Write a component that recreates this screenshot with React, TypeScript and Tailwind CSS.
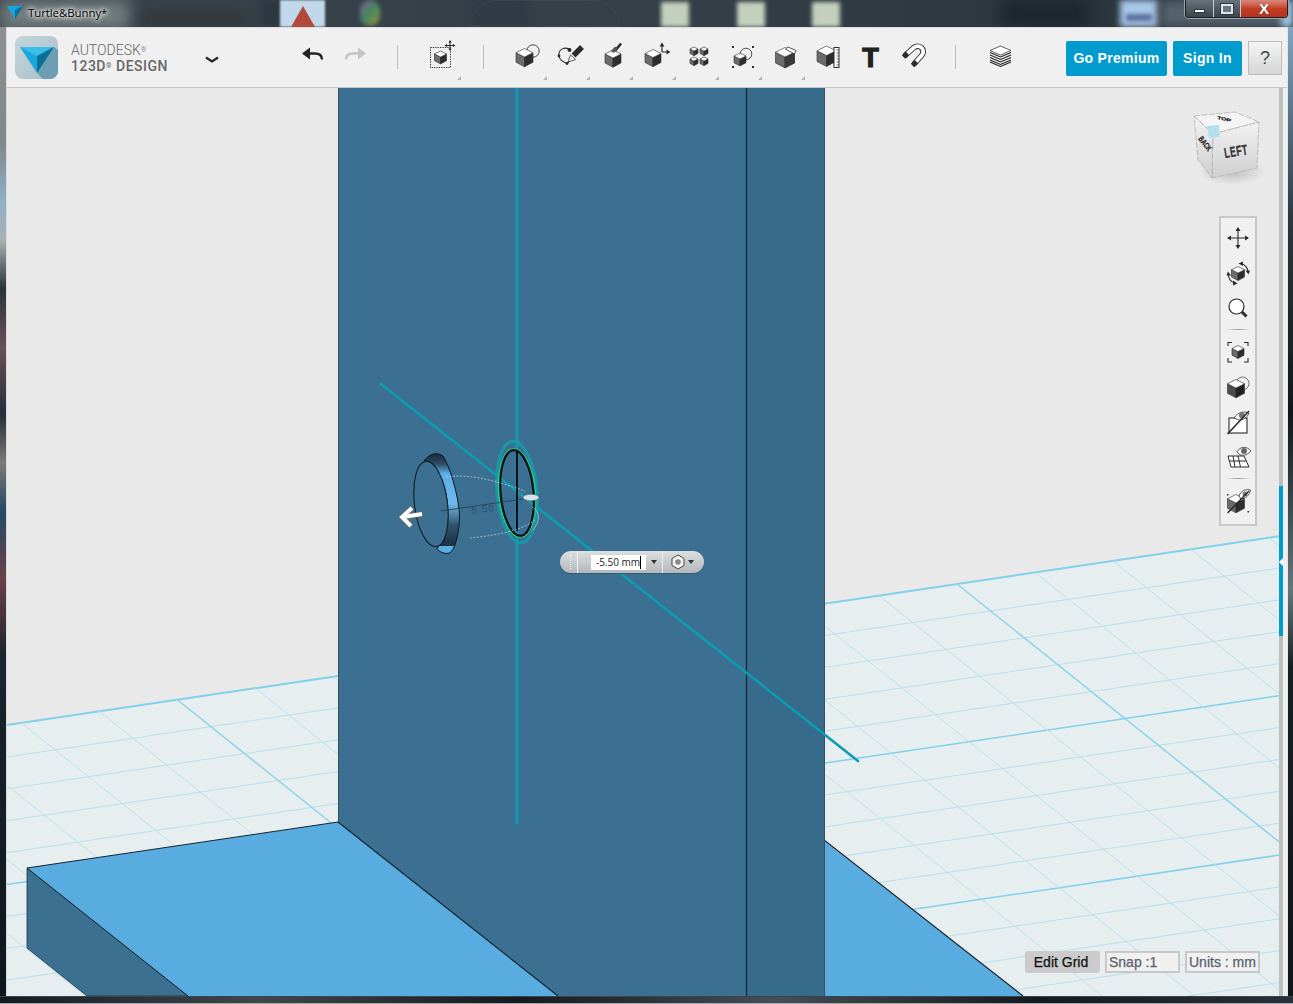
import type { ReactNode } from "react";

const INK = "#2b2b2b";

/** Small isometric box used by most of the toolbar glyphs. */
function Box({ x, y, s, dark = "#2e2e2e", mid = "#6c6c6c" }: { x: number; y: number; s: number; dark?: string; mid?: string }) {
  const h = s * 0.5;
  return (
    <g strokeWidth={0.6} stroke={INK} strokeLinejoin="round">
      <polygon points={`${x - s},${y - h} ${x},${y} ${x},${y + s * 1.15} ${x - s},${y + s * 0.62}`} fill={mid} />
      <polygon points={`${x + s},${y - h} ${x},${y} ${x},${y + s * 1.15} ${x + s},${y + s * 0.62}`} fill={dark} />
      <polygon points={`${x},${y - s} ${x + s},${y - h} ${x},${y} ${x - s},${y - h}`} fill="#fff" />
    </g>
  );
}

function Glyph({ children, size = 30 }: { children: ReactNode; size?: number }) {
  return (
    <svg width={size} height={size} viewBox={`0 0 ${size} ${size}`} fill="none">
      {children}
    </svg>
  );
}

const toolIcons: { name: string; corner: boolean; icon: ReactNode }[] = [
  {
    name: "primitives",
    corner: true,
    icon: (
      <>
        <circle cx="21" cy="11" r="6.2" fill="#f0f0f0" stroke={INK} strokeWidth="0.9" />
        <Box x={12.5} y={17} s={8.5} />
      </>
    ),
  },
  {
    name: "sketch",
    corner: true,
    icon: (
      <>
        <path d="M16 10C10 6 3 9 4 16C4.500 20 8 22 12 23.500L16 19" stroke={INK} strokeWidth="1.1" />
        <circle cx="14.500" cy="10" r="2" fill={INK} />
        <circle cx="4" cy="16" r="1.4" fill={INK} />
        <circle cx="12" cy="23.500" r="1.4" fill={INK} />
        <path d="M27 7L18.500 15.500" stroke={INK} strokeWidth="5.500" />
        <path d="M15.500 15L20.500 19.500L13 22Z" fill="#fff" stroke={INK} strokeWidth="0.8" />
      </>
    ),
  },
  {
    name: "construct",
    corner: true,
    icon: (
      <>
        <Box x={15} y={18} s={8} />
        <path d="M17 11L23 3.500" stroke={INK} strokeWidth="2.600" />
        <path d="M13 11L17 6.500L20 9L15.500 13Z" fill="#555" />
      </>
    ),
  },
  {
    name: "modify",
    corner: true,
    icon: (
      <>
        <Box x={12} y={17.500} s={8} />
        <path d="M21 12V5M21 12H27" stroke={INK} strokeWidth="1.2" />
        <path d="M21 2.500L23.500 6.500H18.500ZM29.500 12L25.500 9.500V14.500Z" fill={INK} />
      </>
    ),
  },
  {
    name: "pattern",
    corner: true,
    icon: (
      <>
        <Box x={10} y={11} s={4} />
        <Box x={20} y={11} s={4} />
        <Box x={10} y={21} s={4} />
        <Box x={20} y={21} s={4} />
      </>
    ),
  },
  {
    name: "grouping",
    corner: true,
    icon: (
      <>
        <circle cx="19" cy="14" r="5.8" fill="#f0f0f0" stroke={INK} strokeWidth="0.8" />
        <Box x={13} y={19} s={6} />
        <g fill={INK}>
          <rect x="5" y="6" width="2" height="2" />
          <rect x="25" y="6" width="2" height="2" />
          <rect x="5" y="26" width="2" height="2" />
          <rect x="25" y="26" width="2" height="2" />
        </g>
      </>
    ),
  },
  {
    name: "combine",
    corner: true,
    icon: (
      <>
        <Box x={15} y={17} s={9.500} />
        <polygon points="18,7 26,10.500 24.500,14 15.500,9" fill="#fff" stroke={INK} strokeWidth="0.8" />
        <polygon points="24.500,14 25,23 15,28 15,17" fill="#3a3a3a" />
      </>
    ),
  },
  {
    name: "measure",
    corner: false,
    icon: (
      <>
        <Box x={13.500} y={15.500} s={9.500} />
        <rect x="21" y="7.500" width="5" height="20" fill="#fff" stroke={INK} strokeWidth="1" />
        <path d="M23.500 10H26M23.500 13H26M23.500 16H26M23.500 19H26M23.500 22H26M23.500 25H26" stroke={INK} strokeWidth="0.7" />
      </>
    ),
  },
  {
    name: "text",
    corner: false,
    icon: (
      <span className="mt-[3px] block h-[30px] font-['Liberation_Sans',sans-serif] text-[27px] font-bold leading-[30px] text-[#222] [-webkit-text-stroke:1.2px_#222]">
        T
      </span>
    ),
  },
  {
    name: "snap",
    corner: false,
    icon: (
      <Glyph>
        <g transform="translate(0 1)">
          <path d="M5.500 15L15 6.500C20 2.500 27 8.500 23 14L15 23" stroke={INK} strokeWidth="5.600" />
          <path d="M5.500 15L15 6.500C20 2.500 27 8.500 23 14L15 23" stroke="#fff" strokeWidth="3.800" />
          <path d="M4.500 16L8.500 12.300M13.500 24.500L17.500 20.700" stroke={INK} strokeWidth="5" />
        </g>
      </Glyph>
    ),
  },
];

const navIcons: ReactNode[] = [
  <>
    <path d="M14 4V24M4 14H24" stroke={INK} strokeWidth="1.1" />
    <path d="M14 3L16.500 7H11.500ZM14 25L16.500 21H11.500ZM3 14L7 11.500V16.500ZM25 14L21 11.500V16.500Z" fill={INK} />
  </>,
  <>
    <Box x={14} y={14} s={6.500} />
    <path d="M17 4.500C21 5.500 24 9 24 13M11 24C7 23 4 19.500 4.500 15" stroke={INK} strokeWidth="1.1" />
    <path d="M14.500 4.500L19 2.500V7ZM24.500 15.500L21.500 11.500H26ZM13.500 24.500L9 26.500V21.500ZM4 12.500L7 16.500H2.500Z" fill={INK} />
  </>,
  <>
    <circle cx="12.500" cy="12.500" r="7.500" fill="#fff" stroke={INK} strokeWidth="1.2" />
    <path d="M18 18L22.500 22.500" stroke={INK} strokeWidth="3" />
  </>,
  null,
  <>
    <Box x={14} y={13.500} s={6} />
    <path d="M4 8V4.500H8M20 4.500H24V8M4 20V24H8M20 24H24V20" stroke={INK} strokeWidth="1.1" />
  </>,
  <>
    <circle cx="18.500" cy="10.500" r="6.500" fill="#f0f0f0" stroke="#555" strokeWidth="0.8" />
    <Box x={12} y={15} s={8.500} dark="#222" mid="#4c4c4c" />
  </>,
  <>
    <rect x="5" y="10" width="18" height="15" fill="#fff" stroke={INK} strokeWidth="1.1" />
    <path d="M10 10C14 4 20 3 25 5C23 10 19 12 15 12Z" fill="#fff" stroke={INK} strokeWidth="0.8" />
    <circle cx="18" cy="7.500" r="3" fill="#777" />
    <path d="M3.500 26L25 3" stroke={INK} strokeWidth="1.600" />
  </>,
  <>
    <path d="M4 13H20L25 24H7ZM5.500 18H22M9 13L11 24M14 13L16.500 24" stroke={INK} strokeWidth="1" fill="#fff" />
    <path d="M13 9C16 3 23 3 27 8C23 13 16 14 13 9Z" fill="#fff" stroke={INK} strokeWidth="0.8" />
    <circle cx="20" cy="8" r="3" fill="#666" />
  </>,
  null,
  <>
    <Box x={12} y={16} s={8.500} />
    <path d="M15 9C17 3 23 2 26.500 3C26 8 21 12 17 12Z" fill="#fff" stroke={INK} strokeWidth="0.8" />
    <circle cx="21" cy="7" r="2.500" fill="#777" />
    <path d="M3.500 26L25 4" stroke={INK} strokeWidth="1.500" />
    <rect x="3" y="7" width="1.500" height="1.500" fill={INK} />
    <rect x="23.500" y="24" width="1.500" height="1.500" fill={INK} />
  </>,
];

function Separator({ className }: { className: string }) {
  return <div className={`mt-[17px] h-[24px] w-px bg-[#bcbcbc] ${className}`} />;
}

function ToolSlot({ icon, corner, className = "w-[43px]" }: { icon: ReactNode; corner: boolean; className?: string }) {
  return (
    <div className={`relative flex h-[59px] shrink-0 justify-center pt-[12px] ${className}`}>
      {icon}
      {corner && (
        <span className="absolute bottom-[7px] right-[1px] h-0 w-0 border-b-[4px] border-l-[4px] border-b-[#b4b4b4] border-l-transparent" />
      )}
    </div>
  );
}

function TitleBar() {
  return (
    <div className="relative h-[27px] shrink-0 overflow-hidden bg-gradient-to-r from-[#3a444d] via-[#353f48] to-[#27323b]">
      {/* blurred desktop behind the glass frame */}
      <div className="absolute left-0 top-0 h-[30px] w-[130px] bg-[#747e80] blur-[8px]" />
      <div className="absolute left-[140px] top-[10px] h-[17px] w-[110px] bg-[#33383a] blur-[8px]" />
      <div className="absolute left-[260px] top-0 h-[27px] w-[60px] bg-[#2c3741] blur-[4px]" />
      <div className="absolute left-[280px] top-0 h-[27px] w-[45px] bg-[#c0d8ea] blur-[1px]" />
      <div className="absolute left-[291px] top-[6px] h-[21px] w-[24px] bg-[#b14a3a] [clip-path:polygon(50%_0,100%_100%,0_100%)]" />
      <div className="absolute left-[360px] top-0 h-[26px] w-[20px] rounded-full bg-gradient-to-br from-[#7a4f9a] via-[#3f8a5c] to-[#a08c3a] blur-[2px]" />
      <div className="absolute left-[469px] top-0 h-[27px] w-[60px] bg-[#2f3a44] blur-[6px]" />
      <div className="absolute left-[470px] top-0 h-[27px] w-[150px] rounded-t-full border border-[#46525c] opacity-40" />
      <div className="absolute left-[661px] top-[2px] h-[25px] w-[28px] bg-[#c4d0bd] blur-[2px]" />
      <div className="absolute left-[737px] top-[2px] h-[25px] w-[28px] bg-[#c4d0bd] blur-[2px]" />
      <div className="absolute left-[812px] top-[2px] h-[25px] w-[28px] bg-[#c4d0bd] blur-[2px]" />
      <div className="absolute left-[1000px] top-0 h-[27px] w-[90px] bg-[#1d252d] blur-[8px]" />
      <div className="absolute left-[1120px] top-0 h-[27px] w-[38px] bg-[#a9c9ea] blur-[3px]" />
      <div className="absolute left-[1126px] top-[14px] h-[7px] w-[26px] bg-[#5a6c9c] blur-[2px]" />
      <div className="absolute left-[1160px] top-0 h-[27px] w-[133px] bg-[#56636d] blur-[6px]" />
      <div className="absolute right-0 top-0 h-[27px] w-[12px] bg-[#9dc3de] blur-[3px]" />

      <div className="relative flex h-full items-start pl-[7px] pt-[5px]">
        <svg width="16" height="15" viewBox="0 0 16 15">
          <polygon points="0,1 16,1 8,14" fill="#17a5dc" />
          <polygon points="8,5 16,1 8,14" fill="#0a6f96" />
        </svg>
        <span className="ml-[5px] font-['Open_Sans',sans-serif] text-[11.500px] leading-[16px] tracking-[-0.1px] text-black [text-shadow:0_0_6px_#fff,0_0_6px_#fff,0_0_3px_#fff]">
          Turtle&amp;Bunny*
        </span>
      </div>

      {/* window controls */}
      <div className="absolute left-[1185px] top-0 flex h-[18px] w-[103px] overflow-hidden rounded-b-[4px] border border-t-0 border-[#1c2227] shadow-[0_0_0_1px_#9aa3a9]">
        <div className="flex w-[28px] items-end justify-center border-r border-[#c4ccd2] bg-gradient-to-b from-[#69747c] to-[#3b444b] pb-[4px]">
          <div className="h-[4px] w-[11px] border border-[#30383e] bg-white" />
        </div>
        <div className="flex w-[27px] items-center justify-center border-r border-[#c4ccd2] bg-gradient-to-b from-[#69747c] to-[#3b444b]">
          <div className="h-[10px] w-[12px] border-2 border-[#dfe5ea] bg-[#6a757d] shadow-[0_0_0_1px_#30383e]" />
        </div>
        <div className="flex flex-1 items-center justify-center bg-gradient-to-b from-[#d8897c] via-[#c23e24] to-[#b4321c] font-['Liberation_Sans',sans-serif] text-[15px] font-bold leading-none text-white [text-shadow:0_0_1px_#333]">
          X
        </div>
      </div>
    </div>
  );
}

function Toolbar() {
  return (
    <div className="flex h-[60px] shrink-0 items-start border-t border-[#dcdcdc] bg-[#f0f0f0] pl-[8px]">
      {/* logo */}
      <svg className="mt-[8px] shrink-0" width="43" height="43" viewBox="0 0 43 43">
        <defs>
          <linearGradient id="logoBg" x1="0" y1="0" x2="1" y2="1">
            <stop offset="0" stopColor="#c5d4da" />
            <stop offset="1" stopColor="#a8bfca" />
          </linearGradient>
        </defs>
        <rect width="43" height="43" rx="8" fill="url(#logoBg)" />
        <path d="M22 37L39 11L43 14V35A8 8 0 0 1 35 43H28Z" fill="#6d9db3" />
        <polygon points="5,11 39,11 22,37" fill="#19a7dc" />
        <polygon points="5,11 39,11 22,20" fill="#3bbdea" />
        <polygon points="22,20 39,11 22,37" fill="#0b6f95" />
      </svg>
      <div className="ml-[13px] mt-[14px] w-[125px] shrink-0 font-['Roboto',sans-serif] text-[#666] [&_sup]:text-[7px] [&_sup]:leading-[0]">
        <div className="text-[14px] font-light leading-[16px]">
          AUTODESK<sup>®</sup>
        </div>
        <div className="text-[14px] font-medium leading-[16px] tracking-[0.5px]">
          123D<sup>®</sup> DESIGN
        </div>
      </div>
      <div className="flex h-[59px] w-[32px] shrink-0 justify-center pt-[27px]">
        <svg width="16" height="10" viewBox="0 0 16 10" fill="none">
          <path d="M2 2.500L8 6.500L14 2.500" stroke="#222" strokeWidth="2.200" />
        </svg>
      </div>

      <div className="ml-[64px] flex h-[59px] w-[42px] shrink-0 justify-center pt-[14px]">
        <Glyph>
          <path d="M7 11.500H17C22 11.500 24 14 24 17.500" stroke="#222" strokeWidth="2.400" />
          <path d="M4 11.500L12 5.500V17.500Z" fill="#222" />
        </Glyph>
      </div>
      <div className="flex h-[59px] w-[42px] shrink-0 justify-center pt-[14px]">
        <Glyph>
          <path d="M23 11.500H13C8 11.500 6 14 6 17.500" stroke="#c4c4c4" strokeWidth="2.400" />
          <path d="M26 11.500L18 5.500V17.500Z" fill="#c4c4c4" />
        </Glyph>
      </div>

      <Separator className="ml-[21px]" />
      <ToolSlot
        className="ml-[22px] w-[42px]"
        corner
        icon={
          <Glyph>
            <rect x="4.500" y="7.500" width="20" height="20" stroke="#222" strokeWidth="1" strokeDasharray="1.200 1.200" fill="none" />
            <Box x={14.500} y={17} s={6} />
            <path d="M24 1.500V9.500M20 5.500H28" stroke="#222" strokeWidth="1" />
            <path d="M24 0L25.500 2.500H22.500ZM24 11L25.500 8.500H22.500ZM18.500 5.500L21 4V7ZM29.500 5.500L27 4V7Z" fill="#222" />
          </Glyph>
        }
      />
      <Separator className="ml-[21px]" />
      <div className="ml-[21px] flex">
        {toolIcons.map((t) => (
          <ToolSlot
            key={t.name}
            icon={t.name === "text" || t.name === "snap" ? t.icon : <Glyph>{t.icon}</Glyph>}
            corner={t.corner}
          />
        ))}
      </div>
      <Separator className="ml-[20px]" />
      <ToolSlot
        className="ml-[23px] w-[42px]"
        corner={false}
        icon={
          <Glyph>
            <polygon points="15.500,6 26,10.500 15.500,15 5,10.500" fill="#fff" stroke="#222" strokeWidth="0.7" />
            <path d="M5 12.500L15.500 17L26 12.500M5 15L15.500 19.500L26 15M5 17.500L15.500 22L26 17.500M5 20L15.500 24.500L26 20M5 22L15.500 26.500L26 22" stroke="#222" strokeWidth="1.100" />
          </Glyph>
        }
      />

      <button className="ml-[45px] mt-[13px] h-[35px] w-[101px] shrink-0 rounded-[2px] bg-[#019ccd] font-['Liberation_Sans',sans-serif] text-[14px] font-bold tracking-[0.3px] text-white">
        Go Premium
      </button>
      <button className="ml-[6px] mt-[13px] h-[35px] w-[69px] shrink-0 rounded-[2px] bg-[#019ccd] font-['Liberation_Sans',sans-serif] text-[14px] font-bold tracking-[0.3px] text-white">
        Sign In
      </button>
      <button className="ml-[6px] mt-[13px] h-[34px] w-[34px] shrink-0 border border-[#bdbdbd] bg-gradient-to-b from-[#f4f4f4] to-[#d6d6d6] font-['Liberation_Sans',sans-serif] text-[18px] text-[#444]">
        ?
      </button>
    </div>
  );
}

function ViewCube() {
  return (
    <g>
      <defs>
        <linearGradient id="cubeRight" x1="0" y1="0" x2="0" y2="1">
          <stop offset="0" stopColor="#f2f2f2" />
          <stop offset="1" stopColor="#cfcfcf" />
        </linearGradient>
        <radialGradient id="cubeShadow">
          <stop offset="0" stopColor="#000" stopOpacity="0.18" />
          <stop offset="1" stopColor="#000" stopOpacity="0" />
        </radialGradient>
      </defs>
      <ellipse cx="1232" cy="172" rx="34" ry="13" fill="url(#cubeShadow)" />
      <g stroke="#b0b0b0" strokeWidth="0.8" strokeDasharray="6 1.500">
        <polygon points="1194,116 1235,112 1259,122 1213,134" fill="#f4f4f4" />
        <polygon points="1213,134 1259,122 1257,168 1212,178" fill="url(#cubeRight)" />
        <polygon points="1194,116 1213,134 1212,178 1198,160" fill="url(#cubeRight)" />
      </g>
      <polygon points="1207,126 1219,125 1220,137 1209,138" fill="#b3dfef" />
      <text transform="translate(1225 158) rotate(-9) scale(0.72 1.200)" fontFamily="'Liberation Sans', sans-serif" fontWeight="700" fontSize="12" fill="#333" stroke="#333" strokeWidth="0.3" letterSpacing="0.8">
        LEFT
      </text>
      <text transform="translate(1198 139) rotate(52) scale(0.7 1)" fontFamily="'Liberation Sans', sans-serif" fontWeight="700" fontSize="8" fill="#222" stroke="#222" strokeWidth="0.3">
        BACK
      </text>
      <text transform="translate(1217 119) rotate(12) scale(1 0.600)" fontFamily="'Liberation Sans', sans-serif" fontWeight="700" fontSize="7" fill="#111" stroke="#111" strokeWidth="0.3">
        TOP
      </text>
    </g>
  );
}

function Scene() {
  // floor grid: u runs along the back edge, v runs into the room
  const us = Array.from({ length: 36 }, (_, i) => i - 30);
  const vs = Array.from({ length: 16 }, (_, i) => i);
  const slope = 0.1485;
  return (
    <svg className="absolute inset-0 h-full w-full" viewBox="7 88 1272 908" preserveAspectRatio="none">
      <defs>
        <linearGradient id="rim" x1="0" y1="0" x2="0" y2="1">
          <stop offset="0" stopColor="#1b2c3a" />
          <stop offset="0.1" stopColor="#2d4a60" />
          <stop offset="0.2" stopColor="#5aaee6" />
          <stop offset="0.5" stopColor="#6cb8ec" />
          <stop offset="0.72" stopColor="#2e536c" />
          <stop offset="0.92" stopColor="#1c3040" />
          <stop offset="0.93" stopColor="#5aaee6" />
          <stop offset="1" stopColor="#5aaee6" />
        </linearGradient>
      </defs>
      <rect x="7" y="88" width="1272" height="908" fill="#e9e9e9" />
      <polygon points="7,726 1279,537 1279,996 7,996" fill="#e6eef0" />

      {vs.map((v) => {
        const x0 = 957 + v * 33.6;
        const y0 = 584 + v * 26.9;
        const major = v % 5 === 0;
        return (
          <line
            key={`v${v}`}
            x1={7}
            y1={y0 + slope * (x0 - 7)}
            x2={1279}
            y2={y0 - slope * (1279 - x0)}
            stroke={major ? "#82d0e9" : "#b9e0ec"}
            strokeWidth={v === 0 ? 2 : major ? 1.500 : 1}
          />
        );
      })}
      {us.map((u) => {
        const x0 = 957 + u * 78;
        const y0 = 584 - u * 11.55;
        const major = u % 10 === 0;
        return (
          <line
            key={`u${u}`}
            x1={x0}
            y1={y0}
            x2={x0 + 33.6 * 30}
            y2={y0 + 26.9 * 30}
            stroke={major ? "#8ed3ea" : "#bde1ed"}
            strokeWidth={major ? 1.500 : 1}
          />
        );
      })}

      {/* slab */}
      <polygon points="27,868 27,948 87,996 188,996" fill="#3c7090" stroke="#21323f" strokeWidth="0.8" />
      <polygon points="27,868 338,822 558,996 188,996" fill="#58acdf" />
      <polygon points="824,841 1023,996 824,996" fill="#58acdf" />
      <path d="M27 868L338 822M27 868L188 996" stroke="#14222c" strokeWidth="1" fill="none" />
      <path d="M824 840L1023 996" stroke="#14222c" strokeWidth="1.200" fill="none" />

      {/* upright */}
      <polygon points="338,88 746,88 746,996 558,996 338,822" fill="#3c7092" />
      <rect x="746" y="88" width="78.500" height="908" fill="#366b8c" />
      <path d="M338.500 88V822M824.500 88V996" stroke="#3a4f5c" strokeWidth="1" />
      <path d="M746.500 88V996" stroke="#14222c" strokeWidth="1.200" />
      <path d="M338 822L558 996" stroke="#14222c" strokeWidth="1.200" />

      {/* axes of the move gizmo */}
      <path d="M517 88V823M381 384L858 761" stroke="#0d9cb1" strokeWidth="2.600" strokeLinecap="round" fill="none" />

      {/* sketch circle being pushed */}
      <g transform="rotate(-5 517 492)">
        <ellipse cx="517" cy="492" rx="20" ry="51" fill="none" stroke="#14a0ac" strokeWidth="3" opacity="0.8" />
        <ellipse cx="517" cy="493" rx="18" ry="44" fill="none" stroke="#21d38b" strokeWidth="2" />
        <ellipse cx="517" cy="493" rx="16.500" ry="43" fill="none" stroke="#0b0f12" strokeWidth="2.200" />
      </g>
      <path d="M517 451V531" stroke="#0b0f12" strokeWidth="2" />

      {/* ghost of the extruded disc */}
      <path
        d="M424 461C428 455 436 451 443 456C449 465 458 492 459.500 515C459.500 530 456 547 451 552C447 555 441 553 437 549C443 540 449 520 447 500C445 482 435 467 424 461Z"
        fill="url(#rim)"
        stroke="#0d151b"
        strokeWidth="1"
      />
      <ellipse cx="431" cy="504" rx="16.500" ry="43" transform="rotate(-7 431 504)" fill="#3c7092" stroke="#0d151b" strokeWidth="1" />

      {/* dimension */}
      <path d="M446 477C470 473 500 482 525 491M470 538C490 536 520 532 535 520" stroke="#c9d4da" strokeWidth="1" strokeDasharray="2 1.500" fill="none" opacity="0.7" />
      <path d="M441 511L530 498" stroke="#2e4050" strokeWidth="0.9" />
      <path d="M532 507C541 512 540 522 533 530" stroke="#c9d4da" strokeWidth="1" fill="none" opacity="0.6" />
      <text transform="translate(472 514) rotate(-8)" fontFamily="'Liberation Sans', sans-serif" fontSize="10" fill="#2f4f66" letterSpacing="1">
        5.50
      </text>
      <ellipse cx="531" cy="497.500" rx="8" ry="3.200" fill="#d7e3e6" stroke="#4b5c66" strokeWidth="0.5" />

      {/* drag arrow */}
      <path d="M423 514L403 517M412 508L402 517L411 526" stroke="#666" strokeWidth="6.500" fill="none" strokeLinejoin="round" opacity="0.7" />
      <path d="M422 514L403 517M412 508L402 517L411 526" stroke="#fff" strokeWidth="4" fill="none" strokeLinejoin="miter" />

      <ViewCube />
    </svg>
  );
}

function NavPanel() {
  return (
    <div className="absolute left-[1212px] top-[128px] flex h-[310px] w-[38px] flex-col items-center border-2 border-[#c8c8c8] bg-[#f0f0f0] pt-[2px]">
      {navIcons.map((icon, i) =>
        icon ? (
          <div key={i} className="flex h-[35px] w-full shrink-0 items-center justify-center">
            <Glyph size={28}>{icon}</Glyph>
          </div>
        ) : (
          <div key={i} className="my-[4px] h-px w-[25px] shrink-0 bg-gradient-to-r from-transparent via-[#999] to-transparent" />
        ),
      )}
    </div>
  );
}

function DistancePill() {
  return (
    <div className="absolute left-[553px] top-[463px] flex h-[22px] w-[144px] items-center rounded-full bg-gradient-to-b from-[#dcdfe0] to-[#b4b8ba] font-['Open_Sans',sans-serif] shadow-[0_1px_1px_#345a75]">
      <div className="flex h-full w-[18px] shrink-0 items-center justify-center border-r border-[#f0f0f0]">
        <div className="ml-[3px] h-[14px] w-px border-l border-dotted border-[#f4f4f4]" />
      </div>
      <div className="ml-[13px] flex h-[15px] w-[55px] shrink-0 items-center justify-center bg-white text-[10px] leading-none text-[#222]">
        -5.50 mm<span className="h-[13px] w-px bg-black" />
      </div>
      <div className="flex h-full w-[17px] shrink-0 items-center justify-center border-r border-[#eeeeee]">
        <span className="h-0 w-0 border-x-[3px] border-t-[4px] border-x-transparent border-t-[#333]" />
      </div>
      <svg className="ml-[7px]" width="16" height="16" viewBox="0 0 16 16">
        <polygon points="8,1 14,4.500 14,11.500 8,15 2,11.500 2,4.500" fill="#f4f4f4" stroke="#444" strokeWidth="1" />
        <circle cx="8" cy="8" r="2.800" fill="#888" />
      </svg>
      <span className="ml-[2px] h-0 w-0 border-x-[3px] border-t-[4px] border-x-transparent border-t-[#333]" />
    </div>
  );
}

function GridStatus() {
  const boxed = "flex h-[22px] items-center border-2 border-[#c8c8c8] bg-[#f0f0f0] pl-[2px] text-[#5a6070]";
  return (
    <div className="absolute bottom-[23px] right-[19px] flex gap-[5px] font-['Liberation_Sans',sans-serif] text-[14px] leading-none [-webkit-text-stroke:0.25px_currentColor]">
      <div className="flex h-[22px] w-[75px] items-center justify-center rounded-[3px] bg-[#cbcbcb] pr-[3px] text-[#111]">Edit Grid</div>
      <div className={`${boxed} w-[75px]`}>Snap :1</div>
      <div className={`${boxed} w-[75px]`}>Units : mm</div>
    </div>
  );
}

function RightRail() {
  return (
    <div className="relative flex w-[8px] shrink-0 bg-[#eef0f0]">
      <div className="flex w-[4px] flex-col">
        <div className="h-[398px] bg-[#b9c0bd]" />
        <div className="h-[150px] bg-[#019ccd]" />
        <div className="flex-1 bg-[#b9c0bd]" />
      </div>
      <span className="absolute left-0 top-[470px] h-0 w-0 border-y-[4px] border-r-[4px] border-y-transparent border-r-white" />
    </div>
  );
}

export default function App() {
  return (
    <div className="flex h-[1004px] w-[1293px] flex-col overflow-hidden bg-[#141c22]">
      <TitleBar />
      <div className="flex h-[969px] shrink-0">
        <div className="w-[7px] shrink-0 border-r border-[#d8dcde] bg-[linear-gradient(to_bottom,#8d8f90_0%,#80898c_12%,#8fb0c8_18%,#aab0b2_22%,#2a343c_27%,#6a5158_33%,#25303a_40%,#7c7a78_45%,#244a66_50%,#6e4048_57%,#1a242c_65%,#0f171d_100%)]" />
        <div className="flex min-w-0 flex-1 flex-col">
          <Toolbar />
          <div className="h-px shrink-0 bg-[#c8c8c8]" />
          <div className="flex min-h-0 flex-1">
            <div className="relative min-w-0 flex-1 overflow-hidden">
              <Scene />
              <NavPanel />
              <DistancePill />
              <GridStatus />
            </div>
            <RightRail />
          </div>
        </div>
        <div className="w-[6px] shrink-0 border-l border-[#e6e6e6] bg-[linear-gradient(to_bottom,#7fa6c4_0%,#2b3741_20%,#10171d_40%,#66777c_58%,#171f26_66%,#0f161c_100%)]" />
      </div>
      <div className="flex-1 border-y border-t-[#3b444b] border-b-[#a4acb0] bg-[linear-gradient(to_right,#141a20,#3f474e_20%,#14191e_40%,#454d55_60%,#14191e_80%,#2a3037)]" />
    </div>
  );
}
